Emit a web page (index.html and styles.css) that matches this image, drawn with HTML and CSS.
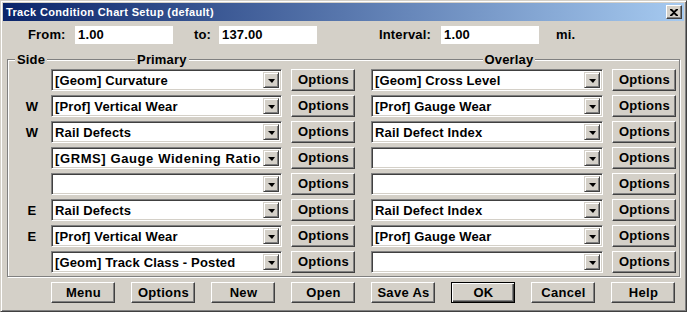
FILE: index.html
```html
<!DOCTYPE html>
<html>
<head>
<meta charset="utf-8">
<link rel="stylesheet" href="styles.css">
</head>
<body>
<div class="window">
  <div class="titlebar">
    <span class="title">Track Condition Chart Setup (default)</span>
    <span class="close"><svg width="8" height="7" viewBox="0 0 8 7"><path d="M0 0h2l2 2 2-2h2v1L5 3.5 8 6v1H6L4 5 2 7H0V6l3-2.5L0 1z" fill="#000"/></svg></span>
  </div>
  <div class="range">
    <span class="lbl lbl-from">From:</span>
    <span class="field">1.00</span>
    <span class="lbl lbl-to">to:</span>
    <span class="field">137.00</span>
    <span class="lbl lbl-int">Interval:</span>
    <span class="field">1.00</span>
    <span class="lbl lbl-mi">mi.</span>
  </div>
  <div class="group">
    <div class="legend-row">
      <span class="lg lg-side">Side</span>
      <span class="lg lg-primary">Primary</span>
      <span class="lg lg-overlay">Overlay</span>
    </div>
    <div class="grid">
      <span class="side"></span>
      <div class="combo"><span class="combo-text">[Geom] Curvature</span><span class="drop"><i class="tri"></i></span></div>
      <button class="btn opt">Options</button>
      <div class="combo combo-ov"><span class="combo-text">[Geom] Cross Level</span><span class="drop"><i class="tri"></i></span></div>
      <button class="btn opt">Options</button>

      <span class="side">W</span>
      <div class="combo"><span class="combo-text">[Prof] Vertical Wear</span><span class="drop"><i class="tri"></i></span></div>
      <button class="btn opt">Options</button>
      <div class="combo combo-ov"><span class="combo-text">[Prof] Gauge Wear</span><span class="drop"><i class="tri"></i></span></div>
      <button class="btn opt">Options</button>

      <span class="side">W</span>
      <div class="combo"><span class="combo-text">Rail Defects</span><span class="drop"><i class="tri"></i></span></div>
      <button class="btn opt">Options</button>
      <div class="combo combo-ov"><span class="combo-text">Rail Defect Index</span><span class="drop"><i class="tri"></i></span></div>
      <button class="btn opt">Options</button>

      <span class="side"></span>
      <div class="combo"><span class="combo-text wide">[GRMS] Gauge Widening Ratio</span><span class="drop"><i class="tri"></i></span></div>
      <button class="btn opt">Options</button>
      <div class="combo combo-ov"><span class="combo-text"></span><span class="drop"><i class="tri"></i></span></div>
      <button class="btn opt">Options</button>

      <span class="side"></span>
      <div class="combo"><span class="combo-text"></span><span class="drop"><i class="tri"></i></span></div>
      <button class="btn opt">Options</button>
      <div class="combo combo-ov"><span class="combo-text"></span><span class="drop"><i class="tri"></i></span></div>
      <button class="btn opt">Options</button>

      <span class="side">E</span>
      <div class="combo"><span class="combo-text">Rail Defects</span><span class="drop"><i class="tri"></i></span></div>
      <button class="btn opt">Options</button>
      <div class="combo combo-ov"><span class="combo-text">Rail Defect Index</span><span class="drop"><i class="tri"></i></span></div>
      <button class="btn opt">Options</button>

      <span class="side">E</span>
      <div class="combo"><span class="combo-text">[Prof] Vertical Wear</span><span class="drop"><i class="tri"></i></span></div>
      <button class="btn opt">Options</button>
      <div class="combo combo-ov"><span class="combo-text">[Prof] Gauge Wear</span><span class="drop"><i class="tri"></i></span></div>
      <button class="btn opt">Options</button>

      <span class="side"></span>
      <div class="combo"><span class="combo-text">[Geom] Track Class - Posted</span><span class="drop"><i class="tri"></i></span></div>
      <button class="btn opt">Options</button>
      <div class="combo combo-ov"><span class="combo-text"></span><span class="drop"><i class="tri"></i></span></div>
      <button class="btn opt">Options</button>
    </div>
  </div>
  <div class="buttons">
    <button class="btn bb">Menu</button>
    <button class="btn bb">Options</button>
    <button class="btn bb">New</button>
    <button class="btn bb">Open</button>
    <button class="btn bb">Save As</button>
    <button class="btn bb default">OK</button>
    <button class="btn bb">Cancel</button>
    <button class="btn bb">Help</button>
  </div>
</div>
</body>
</html>
```

FILE: styles.css
```css
* { box-sizing: border-box; }
html, body { margin: 0; padding: 0; background: #d4d0c8; }
body {
  font-family: "Liberation Sans", Arial, sans-serif;
  font-weight: bold;
  font-size: 13px;
  letter-spacing: 0.15px;
  color: #000;
}
.window {
  width: 687px;
  height: 312px;
  background: #d4d0c8;
  border: 1px solid;
  border-color: #d4d0c8 #404040 #404040 #d4d0c8;
  box-shadow: inset 1px 1px 0 #fff, inset -1px -1px 0 #808080;
  padding: 2px;
}
.titlebar {
  height: 18px;
  background: linear-gradient(to right, #0a246a, #a6caf0);
  display: flex;
  align-items: center;
  justify-content: space-between;
  padding: 0 2px 0 3px;
}
.title {
  color: #fff;
  font-size: 11px;
  font-weight: bold;
  letter-spacing: 0.35px;
}
.close {
  width: 16px;
  height: 14px;
  background: #d4d0c8;
  border: 1px solid;
  border-color: #fff #404040 #404040 #fff;
  box-shadow: inset -1px -1px 0 #808080;
  display: flex;
  align-items: center;
  justify-content: center;
}
.close svg { display: block; margin-left: -1px; }

.range {
  display: flex;
  align-items: center;
  height: 18px;
  margin-top: 5px;
}
.lbl { line-height: 18px; }
.lbl-from { margin-left: 25px; width: 47px; }
.lbl-to { margin-left: 21px; width: 25px; }
.lbl-int { margin-left: 62px; width: 62px; }
.lbl-mi { margin-left: 17px; }
.field {
  background: #fff;
  width: 98px;
  height: 18px;
  line-height: 18px;
  padding-left: 3px;
}

.group {
  margin: 15px 0 0 4px;
  width: 673px;
  border: 1px solid #808080;
  box-shadow: inset 1px 1px 0 #fff, 1px 1px 0 #fff;
  padding: 0 3px 3px 1px;
}
.legend-row {
  display: flex;
  height: 15px;
  margin-top: -8px;
  line-height: 15px;
}
.lg { background: #d4d0c8; padding: 0 2px; }
.lg-side { margin-left: 6px; }
.lg-primary { margin-left: 88px; }
.lg-overlay { margin-left: 294px; }

.grid {
  display: grid;
  grid-template-columns: 42px 231px 73px 248px 73px;
  grid-auto-rows: 22px;
  row-gap: 4px;
  margin-top: 2px;
}
.side {
  display: flex;
  align-items: center;
  justify-content: center;
  padding-left: 4px;
}
.combo {
  width: 231px;
  height: 22px;
  background: #fff;
  border: 1px solid;
  border-color: #808080 #fff #fff #808080;
  box-shadow: inset 1px 1px 0 #404040, inset -1px -1px 0 #d4d0c8;
  display: flex;
  align-items: center;
  padding: 2px 2px 2px 3px;
}
.combo-ov { width: 232px; justify-self: end; }
.combo-text { flex: 1; white-space: nowrap; overflow: hidden; }
.combo-text.wide { letter-spacing: 0.6px; }
.drop {
  width: 16px;
  height: 16px;
  background: #d4d0c8;
  border: 1px solid;
  border-color: #d4d0c8 #404040 #404040 #d4d0c8;
  box-shadow: inset 1px 1px 0 #fff, inset -1px -1px 0 #808080;
  display: flex;
  align-items: center;
  justify-content: center;
}
.tri {
  width: 0;
  height: 0;
  border-left: 4px solid transparent;
  border-right: 3px solid transparent;
  border-top: 4px solid #000;
  margin-top: 1px;
}
.btn {
  font: inherit;
  letter-spacing: 0.3px;
  color: #000;
  background: #d4d0c8;
  width: 64px;
  height: 22px;
  border: 1px solid;
  border-color: #fff #404040 #404040 #fff;
  box-shadow: inset -1px -1px 0 #808080;
  padding: 0 0 0 1px;
  margin: 0;
  line-height: 18px;
  text-align: center;
}
.opt { justify-self: end; }
.buttons {
  display: flex;
  gap: 16px;
  margin-top: 5px;
  padding-left: 48px;
}
.bb { height: 21px; }
.default {
  border: 1px solid #000;
  box-shadow: inset 1px 1px 0 #fff, inset -1px -1px 0 #404040, inset -2px -2px 0 #808080;
}
```
